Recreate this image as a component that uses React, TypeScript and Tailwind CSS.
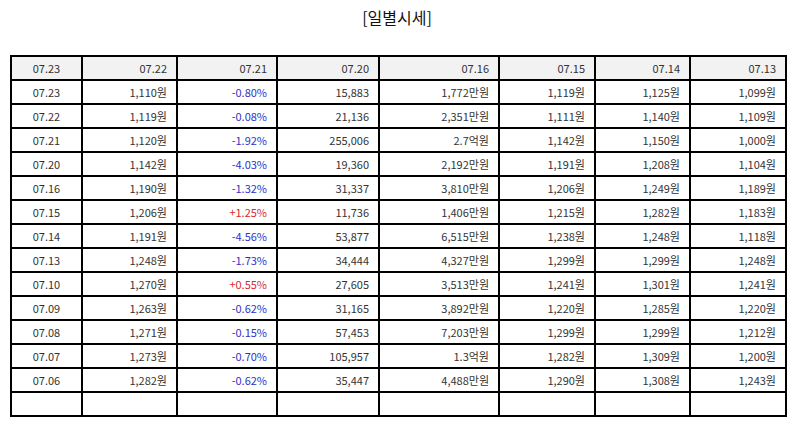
const rows: [string, string, string, string, string, string, string, string][] = [
  ["07.23", "1,110원", "-0.80%", "15,883", "1,772만원", "1,119원", "1,125원", "1,099원"],
  ["07.22", "1,119원", "-0.08%", "21,136", "2,351만원", "1,111원", "1,140원", "1,109원"],
  ["07.21", "1,120원", "-1.92%", "255,006", "2.7억원", "1,142원", "1,150원", "1,000원"],
  ["07.20", "1,142원", "-4.03%", "19,360", "2,192만원", "1,191원", "1,208원", "1,104원"],
  ["07.16", "1,190원", "-1.32%", "31,337", "3,810만원", "1,206원", "1,249원", "1,189원"],
  ["07.15", "1,206원", "+1.25%", "11,736", "1,406만원", "1,215원", "1,282원", "1,183원"],
  ["07.14", "1,191원", "-4.56%", "53,877", "6,515만원", "1,238원", "1,248원", "1,118원"],
  ["07.13", "1,248원", "-1.73%", "34,444", "4,327만원", "1,299원", "1,299원", "1,248원"],
  ["07.10", "1,270원", "+0.55%", "27,605", "3,513만원", "1,241원", "1,301원", "1,241원"],
  ["07.09", "1,263원", "-0.62%", "31,165", "3,892만원", "1,220원", "1,285원", "1,220원"],
  ["07.08", "1,271원", "-0.15%", "57,453", "7,203만원", "1,299원", "1,299원", "1,212원"],
  ["07.07", "1,273원", "-0.70%", "105,957", "1.3억원", "1,282원", "1,309원", "1,200원"],
  ["07.06", "1,282원", "-0.62%", "35,447", "4,488만원", "1,290원", "1,308원", "1,243원"],
];

const heads = ["07.23", "07.22", "07.21", "07.20", "07.16", "07.15", "07.14", "07.13"];
const widths = ["w-[71px]", "w-[95px]", "w-[100px]", "w-[102px]", "w-[120px]", "w-[96px]", "w-[95px]", "w-[96px]"];

const cell = "h-[24px] border-2 border-black px-[9px] py-0 leading-none";

function align(i: number) {
  return i === 0 ? "text-center" : "text-right";
}

function tone(v: string) {
  if (v.startsWith("+")) return "text-[#d62b2b]";
  if (v.startsWith("-")) return "text-[#3131c9]";
  return "text-[#333]";
}

export default function App() {
  return (
    <div className="w-[794px] h-[425px] bg-white font-['Noto_Sans_CJK_KR','Noto_Sans',sans-serif] text-[#222]">
      <h1 className="pt-[5px] text-center text-[16px] leading-[24px] text-[#111]">[일별시세]</h1>
      <table className="ml-[10px] mt-[26px] w-[775px] table-fixed border-collapse text-[11px]">
        <colgroup>
          {widths.map((w, i) => (
            <col key={i} className={w} />
          ))}
        </colgroup>
        <thead>
          <tr className="bg-[#f2f2f2]">
            {heads.map((h, i) => (
              <th key={i} className={`${cell} ${align(i)} font-normal text-[#333]`}>
                {h}
              </th>
            ))}
          </tr>
        </thead>
        <tbody>
          {rows.map((r) => (
            <tr key={r[0]}>
              {r.map((v, i) => (
                <td key={i} className={`${cell} ${align(i)} ${i === 2 ? tone(v) : "text-[#333]"}`}>
                  {v}
                </td>
              ))}
            </tr>
          ))}
          <tr>
            {heads.map((_, i) => (
              <td key={i} className={cell}></td>
            ))}
          </tr>
        </tbody>
      </table>
    </div>
  );
}
